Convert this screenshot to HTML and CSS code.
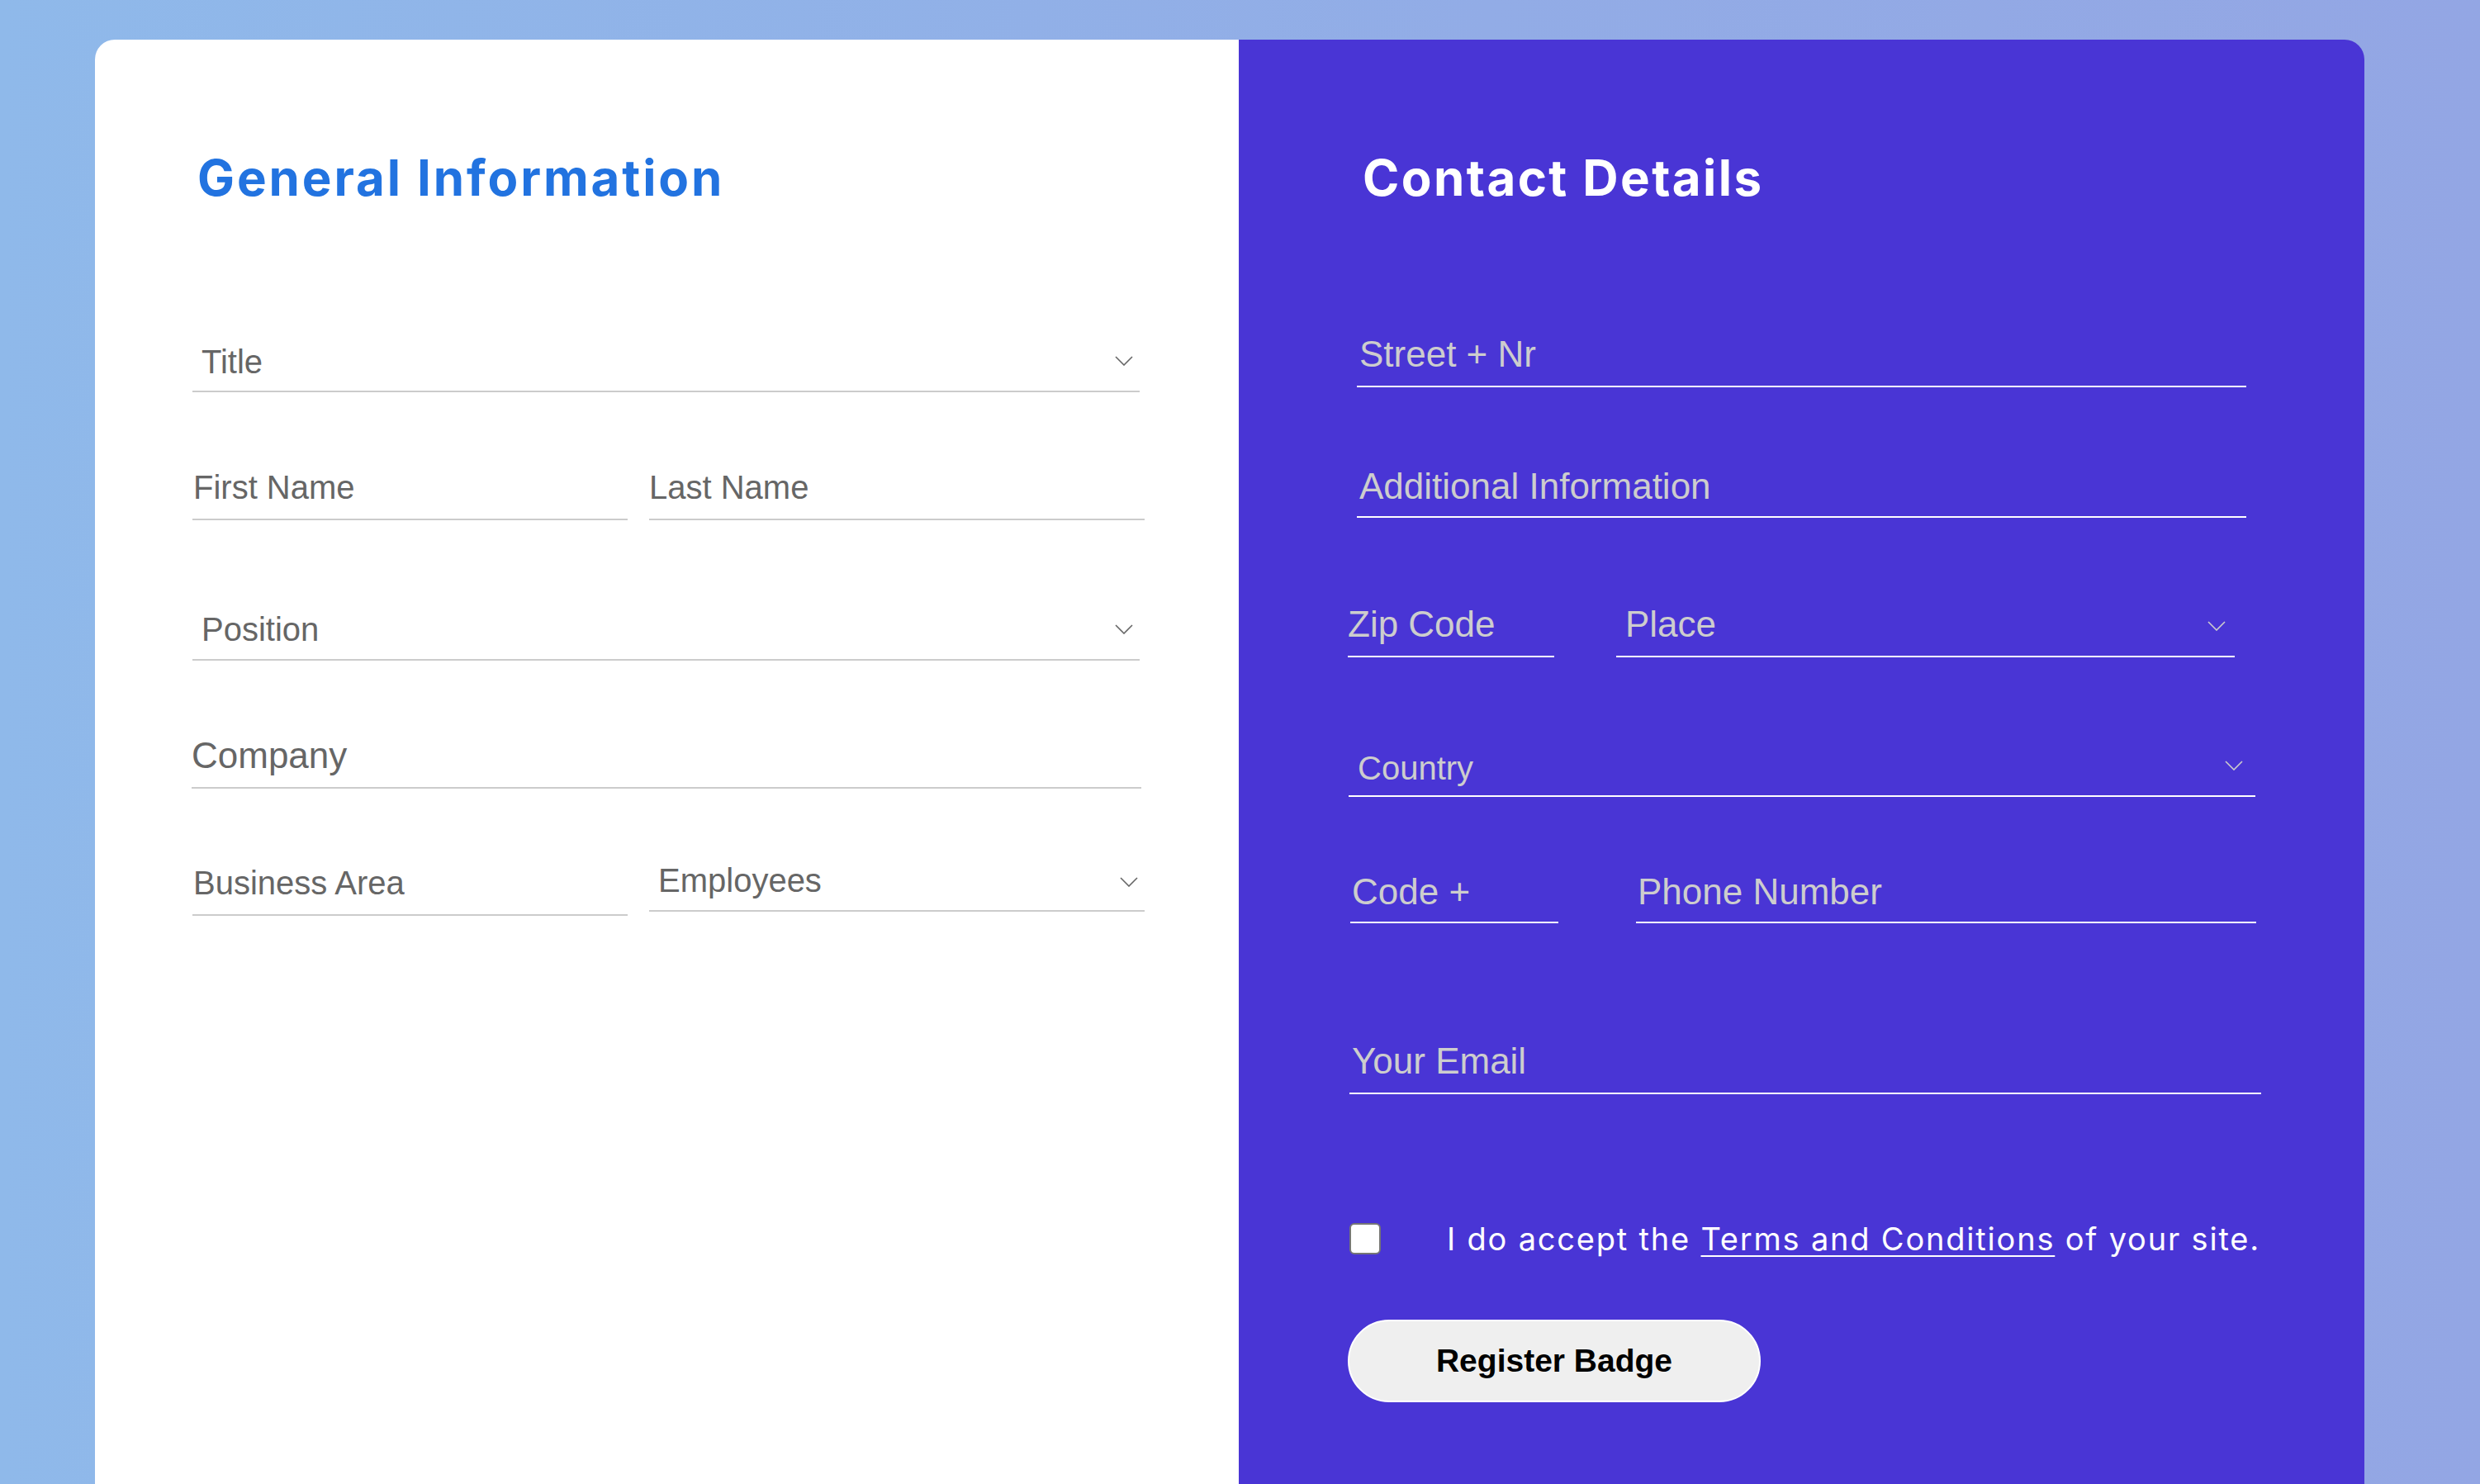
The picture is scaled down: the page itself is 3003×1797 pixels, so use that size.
FILE: index.html
```html
<!DOCTYPE html>
<html lang="en">
<head>
<meta charset="utf-8">
<title>Register Badge</title>
<link rel="stylesheet" href="styles.css">
</head>
<body>
<main class="card">
  <section class="panel panel-general">
    <h1 class="heading heading-general">General Information</h1>

    <div class="field field-select f-title">
      <span class="label">Title</span>
      <svg class="chev" viewBox="0 0 22 12" width="22" height="12"><polyline points="1,1 11,11 21,1"/></svg>
    </div>

    <div class="row r-names">
      <div class="field f-first"><span class="label">First Name</span></div>
      <div class="field f-last"><span class="label">Last Name</span></div>
    </div>

    <div class="field field-select f-position">
      <span class="label">Position</span>
      <svg class="chev" viewBox="0 0 22 12" width="22" height="12"><polyline points="1,1 11,11 21,1"/></svg>
    </div>

    <div class="field f-company"><span class="label label-lg">Company</span></div>

    <div class="row r-business">
      <div class="field f-business"><span class="label">Business Area</span></div>
      <div class="field field-select f-employees">
        <span class="label">Employees</span>
        <svg class="chev" viewBox="0 0 22 12" width="22" height="12"><polyline points="1,1 11,11 21,1"/></svg>
      </div>
    </div>
  </section>

  <section class="panel panel-contact">
    <h1 class="heading heading-contact">Contact Details</h1>

    <div class="field light f-street"><span class="label label-lg">Street + Nr</span></div>
    <div class="field light f-additional"><span class="label label-lg">Additional Information</span></div>

    <div class="row r-zip">
      <div class="field light f-zip"><span class="label label-lg">Zip Code</span></div>
      <div class="field light field-select f-place">
        <span class="label label-lg">Place</span>
        <svg class="chev" viewBox="0 0 22 12" width="22" height="12"><polyline points="1,1 11,11 21,1"/></svg>
      </div>
    </div>

    <div class="field light field-select f-country">
      <span class="label">Country</span>
      <svg class="chev" viewBox="0 0 22 12" width="22" height="12"><polyline points="1,1 11,11 21,1"/></svg>
    </div>

    <div class="row r-phone">
      <div class="field light f-code"><span class="label label-lg">Code +</span></div>
      <div class="field light f-phone"><span class="label label-lg">Phone Number</span></div>
    </div>

    <div class="field light f-email"><span class="label label-lg">Your Email</span></div>

    <label class="consent">
      <input type="checkbox" class="check">
      <span class="consent-text">I do accept the <a class="terms" href="#">Terms and Conditions</a> of your site.</span>
    </label>

    <button class="submit" type="button">Register Badge</button>
  </section>
</main>
</body>
</html>
```

FILE: styles.css
```css
* { box-sizing: border-box; }

html, body {
  margin: 0;
  padding: 0;
  height: 100%;
  overflow: hidden;
}

body {
  background: linear-gradient(90deg, #8fb9ea 0%, #92acE6 60%, #93a6e4 100%);
  font-family: "Liberation Sans", Arial, sans-serif;
}

.card {
  display: grid;
  grid-template-columns: 1385px 1363px;
  margin: 48px 0 0 115px;
  width: 2748px;
  min-height: 1800px;
}

.panel {
  display: flex;
  flex-direction: column;
  align-items: flex-start;
}

.panel-general {
  background: #ffffff;
  border-top-left-radius: 24px;
  padding: 137px 0 0 118px;
}

.panel-contact {
  background: #4935d5;
  border-top-right-radius: 24px;
  padding: 137px 0 0 132px;
}

.heading {
  margin: 0;
  font-family: Inter, "Noto Sans", sans-serif;
  font-weight: 700;
  font-size: 60px;
  line-height: 60px;
  height: 60px;
  white-space: nowrap;
}

.heading-general {
  color: #2273e0;
  margin-left: 6px;
  letter-spacing: 2.9px;
}

.heading-contact {
  color: #ffffff;
  margin-left: 18px;
  letter-spacing: 2.4px;
}

.row {
  display: flex;
  align-items: flex-start;
}

.field {
  display: flex;
  align-items: flex-end;
  height: 62px;
  padding: 0 0 0 1px;
  border-bottom: 2px solid #cccccc;
  color: #666666;
}

.field.light {
  border-bottom-color: #ffffff;
  color: #cdcdcd;
}

.field-select {
  padding-left: 11px;
  padding-right: 8px;
}

.label {
  font-size: 40px;
  line-height: 40px;
  white-space: nowrap;
  margin-bottom: 16px;
}

.label-lg {
  font-size: 44px;
  line-height: 44px;
}

.chev {
  margin-left: auto;
  margin-bottom: 30px;
  fill: none;
  stroke: currentColor;
  stroke-width: 1.6;
}

/* General information fields */
.f-title { width: 1147px; margin-top: 168px; }
.f-title .label { margin-bottom: 15px; }
.r-names { margin-top: 93px; }
.f-first { width: 527px; }
.f-first .label, .f-last .label { margin-bottom: 18px; }
.f-last { width: 600px; margin-left: 26px; padding-left: 0; }
.f-position { width: 1147px; margin-top: 108px; }
.f-company { width: 1150px; margin-top: 93px; margin-left: -1px; padding-left: 0; }
.f-company .label { margin-bottom: 16px; }
.r-business { margin-top: 92px; }
.f-business { width: 527px; }
.f-business .label { margin-bottom: 18px; }
.f-employees { width: 600px; margin-left: 26px; height: 57px; }
.f-employees .label { margin-bottom: 16px; }
.f-employees .chev { margin-bottom: 28px; }

/* Contact fields */
.f-street { width: 1077px; margin-left: 11px; margin-top: 162px; padding-left: 3px; }
.f-additional { width: 1077px; margin-left: 11px; margin-top: 96px; padding-left: 3px; }
.f-additional .label { margin-bottom: 14px; }
.r-zip { margin-top: 107px; }
.r-zip .label { margin-bottom: 16px; }
.f-zip { width: 250px; padding-left: 0; }
.f-place { width: 749px; margin-left: 75px; padding-right: 11px; }
.f-country { width: 1098px; margin-left: 1px; margin-top: 107px; padding-right: 15px; }
.f-country .label { margin-bottom: 13px; }
.r-phone { margin-top: 91px; margin-left: 3px; }
.r-phone .label { margin-bottom: 14px; }
.f-code { width: 252px; padding-left: 2px; }
.f-phone { width: 751px; margin-left: 94px; padding-left: 2px; }
.f-email { width: 1104px; margin-left: 2px; margin-top: 145px; padding-left: 3px; }
.f-email .label { margin-bottom: 16px; }

.consent {
  display: flex;
  align-items: center;
  margin-top: 156px;
  margin-left: 2px;
  height: 38px;
}

.check {
  appearance: none;
  -webkit-appearance: none;
  margin: 0;
  width: 38px;
  height: 38px;
  background: #ffffff;
  border: 2px solid #767676;
  border-radius: 6px;
  flex: none;
}

.consent-text {
  margin-left: 80px;
  font-family: Inter, "Noto Sans", sans-serif;
  font-size: 38px;
  letter-spacing: 1.8px;
  color: #ffffff;
  white-space: nowrap;
}

.terms {
  color: #ffffff;
  text-decoration: underline;
  text-decoration-thickness: 2px;
  text-underline-offset: 6px;
}

.submit {
  margin-top: 79px;
  width: 500px;
  height: 100px;
  background: #efefef;
  border: 2px solid #ffffff;
  border-radius: 50px;
  font-family: "Liberation Sans", Arial, sans-serif;
  font-weight: 700;
  font-size: 39px;
  color: #000000;
  padding: 0;
}
```
